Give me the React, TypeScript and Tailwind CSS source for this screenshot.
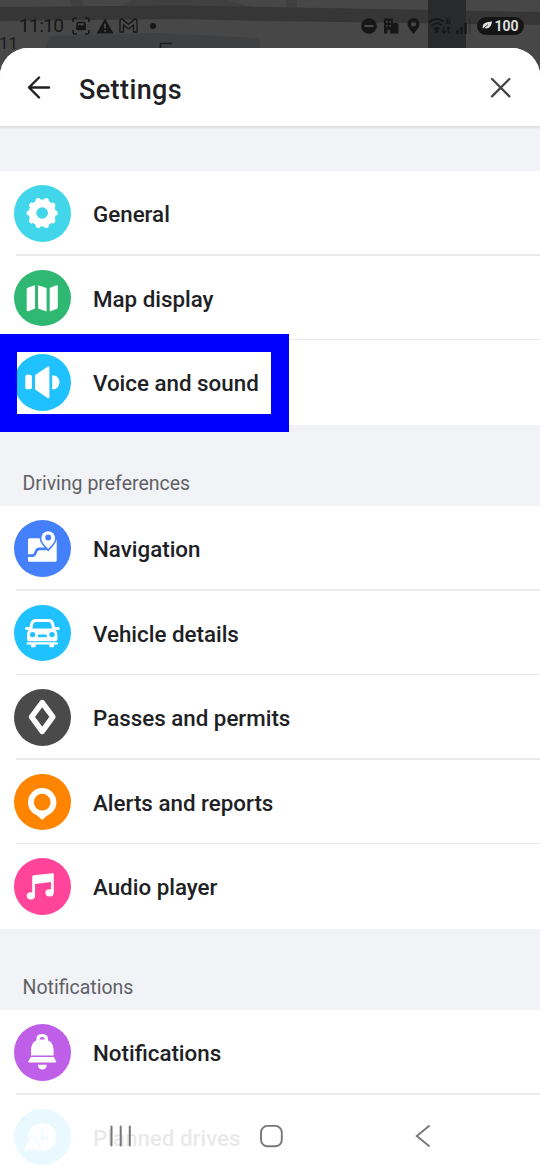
import type { ReactNode } from 'react'

type Item = {
	label: string
	color: string
	icon: ReactNode
}

const gearTeeth = [0, 36, 72, 108, 144, 180, 216, 252, 288, 324]

const general: Item[] = [
	{
		label: 'General',
		color: 'bg-[#41d6e9]',
		icon: (
			<>
				<circle cx="28.2" cy="28" r="9.7" stroke="#fff" strokeWidth="7.8" fill="none" />
				{gearTeeth.map((deg) => (
					<path
						key={deg}
						d="M39.8 28H41.2"
						stroke="#fff"
						strokeWidth="5.2"
						strokeLinecap="round"
						transform={`rotate(${deg} 28.2 28)`}
					/>
				))}
			</>
		),
	},
	{
		label: 'Map display',
		color: 'bg-[#2eb872]',
		icon: (
			<>
				<path d="M12.7 19.6Q12.7 18 14.3 17.4L21 15.2V38.6L14.3 41.2Q12.7 41.6 12.7 40Z" />
				<path d="M24 15.2L32.6 18V41.4L24 38.6Z" />
				<path d="M35.7 18L42.3 15.3Q43.8 15 43.8 16.6V37Q43.8 38.4 42.5 38.9L35.7 41.4Z" />
			</>
		),
	},
	{
		label: 'Voice and sound',
		color: 'bg-[#1fc1ff]',
		icon: (
			<>
				<rect x="11.3" y="20.8" width="6.6" height="14.4" rx="1.8" />
				<path d="M21 22.2Q21 21.2 21.8 20.5L33.6 12.8Q35.4 11.8 35.4 13.8V43Q35.4 45 33.6 44L21.8 35.9Q21 35.2 21 34.2Z" />
				<path d="M38.2 21.2C42.6 21.2 45.4 24 45.4 28.2S42.6 35.4 38.2 35.4Z" />
			</>
		),
	},
]

const driving: Item[] = [
	{
		label: 'Navigation',
		color: 'bg-[#4580fb]',
		icon: (
			<>
				<path d="M15.5 18.3H30L34.4 28L42.7 19.5V40.2Q42.7 41.7 41.2 41.7H15.5Q14 41.7 14 40.2V19.8Q14 18.3 15.5 18.3Z" />
				<path d="M13.8 35.6H18.5C22.8 35.6 20.5 28.8 25.2 28.8H30.5Q33.5 28.8 34.4 27" stroke="#4580fb" strokeWidth="2.7" fill="none" />
				<path
					d="M34.2 29C30 24.8 27.3 21.6 27.3 18.1A6.9 6.9 0 0 1 41.1 18.1C41.1 21.6 38.4 24.8 34.2 29Z"
					stroke="#4580fb"
					strokeWidth="3.4"
					paintOrder="stroke"
				/>
				<circle cx="34.2" cy="17.6" r="3" fill="#4580fb" />
			</>
		),
	},
	{
		label: 'Vehicle details',
		color: 'bg-[#1fc1ff]',
		icon: (
			<>
				<path d="M16.6 24.5L17.8 18.6Q18.6 15.6 21.6 15.5H34.8Q37.8 15.6 38.6 18.6L39.8 24.5" stroke="#fff" strokeWidth="3" fill="none" />
				<rect x="11.2" y="22" width="5" height="3" rx="1.2" />
				<rect x="40.6" y="22" width="5" height="3" rx="1.2" />
				<path d="M16.4 23.6H40Q43.4 26 43.4 29V34.2Q43.4 36.2 41.4 36.2H15Q13 36.2 13 34.2V29Q13 26 16.4 23.6Z" />
				<circle cx="18.6" cy="29.6" r="2.7" fill="#1fc1ff" />
				<circle cx="38" cy="29.6" r="2.7" fill="#1fc1ff" />
				<rect x="23.8" y="29.6" width="9" height="2.6" rx="1" fill="#1fc1ff" />
				<path d="M14 37.2H42.6Q44 37.2 44 38.4T42.6 39.6H40.2V40.8Q40.2 42.2 39 42.2H36.4Q35.2 42.2 35.2 40.8V39.6H21.8V40.8Q21.8 42.2 20.6 42.2H18Q16.8 42.2 16.8 40.8V39.6H14Q12.6 39.6 12.6 38.4T14 37.2Z" />
			</>
		),
	},
	{
		label: 'Passes and permits',
		color: 'bg-[#4a4a4a]',
		icon: <path d="M28.2 13.6L38.8 27.9L28.2 42.4L17.6 27.9Z" stroke="#fff" strokeWidth="5.6" strokeLinejoin="round" fill="none" />,
	},
	{
		label: 'Alerts and reports',
		color: 'bg-[#ff8400]',
		icon: (
			<>
				<circle cx="28.2" cy="28.2" r="11.3" stroke="#fff" strokeWidth="5.8" fill="none" />
				<path d="M22.6 40.8L27 45Q28.2 46.2 29.4 45L33.8 40.8Z" />
			</>
		),
	},
	{
		label: 'Audio player',
		color: 'bg-[#ff4499]',
		icon: (
			<>
				<path d="M18.2 18.8Q18.2 17.5 19.6 17.3L38.4 15.2Q39.8 15 39.8 16.4V34.2H37V24L21 26V37.5H18.2Z" />
				<ellipse cx="16.9" cy="37.8" rx="4.2" ry="3.6" />
				<ellipse cx="35.6" cy="34.8" rx="4.2" ry="3.6" />
			</>
		),
	},
]

const notifications: Item[] = [
	{
		label: 'Notifications',
		color: 'bg-[#bf5fe8]',
		icon: (
			<>
				<path d="M22.4 18V14.6Q22.6 10 28.2 10T34 14.6V18Z" />
				<path d="M17 31.4V27C17 19.4 20.4 15.2 28.2 15.2S39.6 19.4 39.6 27V31.4Z" />
				<path d="M25.6 15.6Q25.6 13 28.2 13T30.8 15.6Z" fill="#bf5fe8" />
				<path d="M16.8 33H39.8L42 37.2Q42.4 38.6 41 38.6H15.4Q14 38.6 14.4 37.2Z" />
				<path d="M23.8 40.8H32.8Q32.4 45.6 28.3 45.6T23.8 40.8Z" />
			</>
		),
	},
	{
		label: 'Planned drives',
		color: 'bg-[#1fc1ff]',
		icon: (
			<>
				<circle cx="28.4" cy="28" r="14" />
				<path d="M28.4 20V29.5H34.5" stroke="#1fc1ff" strokeWidth="2" fill="none" />
				<path
					d="M16.6 27.6Q17.8 26.2 19 27.6L26.2 40.4Q26.8 42.4 24.8 42L17.8 40L11.6 42Q9.8 42.4 10.4 40.4Z"
					stroke="#1fc1ff"
					strokeWidth="2.4"
					paintOrder="stroke"
				/>
			</>
		),
	},
]

function Row({ item, last }: { item: Item; last: boolean }) {
	return (
		<div className="relative flex h-[84.5px] shrink-0 items-center bg-white pt-[0.5px] pl-[14px]">
			<div className={`size-[56.5px] shrink-0 rounded-full ${item.color}`}>
				<svg viewBox="0 0 56.5 56.5" className="size-full" fill="#fff">
					{item.icon}
				</svg>
			</div>
			<span className="ml-[22.5px] pt-[1.5px] text-[22.35px] leading-7 font-medium whitespace-nowrap text-[#202124]">{item.label}</span>
			{!last && <div className="absolute right-0 bottom-0 left-4 z-10 h-[1.5px] bg-[#e8eaed]" />}
		</div>
	)
}

function Section({ title, items }: { title?: string; items: Item[] }) {
	return (
		<section className="flex shrink-0 flex-col">
			{title && (
				<h2 className="flex h-[81.5px] items-end pb-[8.5px] pl-[22.5px] text-[19.5px] leading-7 text-[#5f6165]">{title}</h2>
			)}
			{items.map((item, i) => (
				<Row key={item.label} item={item} last={i === items.length - 1} />
			))}
		</section>
	)
}

function MapBackdrop() {
	return (
		<svg className="absolute inset-0" width="540" height="90" viewBox="0 0 540 90">
			<rect width="540" height="90" fill="#474747" />
			<path d="M70 0H82L84 8H72ZM118 8L132 0H226L256 8ZM286 0H297V10H286Z" fill="#404040" />
			<path d="M50 36L160 33L255 38Q260 39 260 44V60H40Z" fill="#3f4041" />
			<path d="M0 7L180 5.5L540 12V25L270 21L180 19L0 21Z" fill="#363636" />
			<rect x="428" width="38" height="60" fill="#292a2b" />
			<text x="-1" y="49" fontSize="17" fill="#1c1c1c">11</text>
			<path d="M160.5 48V43.5H172" stroke="#1c1c1c" strokeWidth="1.6" fill="none" />
		</svg>
	)
}

function StatusBar() {
	return (
		<div className="relative flex h-12 items-center justify-between pt-[3px] pr-[16px] pl-[19px] text-[#171717]">
			<div className="flex items-center">
				<span className="w-[53px] pt-px text-[19px] leading-6 tracking-[-0.6px]">11:10</span>
				<svg width="18" height="18" viewBox="0 0 18 18" fill="none" stroke="currentColor" strokeWidth="1.6">
					<path d="M1 5V3Q1 1 3 1H5M13 1H15Q17 1 17 3V5M17 13V15Q17 17 15 17H13M5 17H3Q1 17 1 15V13" />
					<rect x="5" y="5.5" width="8" height="7" rx="1.5" />
					<path d="M5 11L8 8.5L10 10L13 8V12H5Z" fill="currentColor" />
				</svg>
				<svg className="ml-[6px]" width="18" height="16" viewBox="0 0 18 16">
					<path d="M9 .5L17.5 15.5H.5Z" fill="currentColor" />
					<path d="M9 5.5V10.5M9 12V13.8" stroke="#4a4a4a" strokeWidth="1.8" />
				</svg>
				<svg className="ml-[5px]" width="19" height="15" viewBox="0 0 19 15" fill="none" stroke="currentColor" strokeWidth="1.3">
					<path d="M1 14V3Q1 1 3 1L9.5 6.3L16 1Q18 1 18 3V14H14.5V7L9.5 11L4.5 7V14Z" />
				</svg>
				<div className="ml-[12px] size-[6px] rounded-full bg-[#171717]" />
			</div>
			<div className="flex items-center">
				<svg width="16" height="16" viewBox="0 0 16 16">
					<circle cx="8" cy="8" r="7.8" fill="currentColor" />
					<path d="M3.5 8H12.5" stroke="#4a4a4a" strokeWidth="2" />
				</svg>
				<svg className="ml-[7px]" width="15" height="16" viewBox="0 0 15 16">
					<path d="M0 2Q0 .5 1.5 .5H7.5Q9 .5 9 2V5H13Q14.5 5 14.5 6.5V15.5H6V12H3.5V15.5H0Z" fill="currentColor" />
					<path d="M2 4H3.6M5.4 4H7M2 8H3.6M5.4 8H7" stroke="#4a4a4a" strokeWidth="1.4" />
				</svg>
				<svg className="ml-[8px]" width="13" height="16" viewBox="0 0 13 16">
					<path d="M6.5 16C3 11.6 .5 9 .5 6A6 6 0 0 1 12.5 6C12.5 9 10 11.6 6.5 16ZM6.5 3.6A2.5 2.5 0 1 0 6.5 8.6A2.5 2.5 0 1 0 6.5 3.6Z" fill="currentColor" />
				</svg>
				<svg className="ml-[8px]" width="24" height="18" viewBox="0 0 24 18" fill="none" stroke="currentColor" strokeWidth="1.8">
					<path d="M1 5.5Q8.5 -1 16 4.5M3.5 8.8Q8.5 4 13.5 8M6 12Q8.5 9.5 11 12" />
					<circle cx="8.5" cy="14" r="1" fill="currentColor" />
					<path d="M16 10V16M14 14L16 16.3L18 14M20.5 16V10M18.8 12L20.5 10L22.3 12" strokeWidth="1.2" />
					<path d="M21.8 1.2H19V6.2H21.8V3.7H19" strokeWidth="1.1" />
				</svg>
				<svg className="ml-[4px]" width="16" height="16" viewBox="0 0 16 16" fill="currentColor">
					<rect y="12" width="2.4" height="4" />
					<rect x="4.2" y="9" width="2.4" height="7" />
					<rect x="8.4" y="5" width="2.4" height="11" />
					<rect x="12.6" y="1" width="2.4" height="15" opacity=".25" />
				</svg>
				<div className="ml-[5px] flex h-[18px] w-[47px] items-center justify-center gap-[2px] rounded-full bg-[#151515] text-[#dedede]">
					<svg width="10" height="9" viewBox="0 0 10 9">
						<path d="M1 8C-.5 3 3 .8 10 .5C9.5 5.5 6.5 8.5 2.5 7Z" fill="currentColor" />
						<path d="M0 8.6L6 3.6" stroke="#151515" strokeWidth=".8" />
					</svg>
					<span className="text-[14px] leading-none font-bold">100</span>
				</div>
			</div>
		</div>
	)
}

function NavBar() {
	return (
		<nav className="absolute inset-x-0 bottom-0 z-20 flex h-[74px] items-start bg-white/90 pt-[28px] pl-[109px] text-[#777]">
			<svg width="24" height="24" viewBox="0 0 24 24" fill="none" stroke="currentColor" strokeWidth="2" strokeLinecap="round">
				<path d="M2.5 2.5V21.5M11.7 2.5V21.5M20.8 2.5V21.5" />
			</svg>
			<svg className="ml-[126px]" width="25" height="24" viewBox="0 0 25 24" fill="none" stroke="currentColor" strokeWidth="1.9">
				<rect x="2" y="1.9" width="20.8" height="20.4" rx="6.5" />
			</svg>
			<svg className="ml-[130px]" width="18" height="24" viewBox="0 0 18 24" fill="none" stroke="currentColor" strokeWidth="1.9" strokeLinecap="round">
				<path d="M15 2L2.8 12L15 22" />
			</svg>
		</nav>
	)
}

export default function App() {
	return (
		<div className="relative flex h-[1170px] w-[540px] flex-col overflow-hidden bg-[#474747] font-['Roboto',sans-serif]">
			<MapBackdrop />
			<StatusBar />
			<main className="relative flex min-h-0 flex-1 flex-col overflow-hidden rounded-t-[28px] bg-[#f2f3f7]">
				<header className="flex h-[78px] shrink-0 items-center bg-white pr-[29px] pl-[27px] shadow-[0_1px_2px_1px_#dcdde0]">
					<svg width="24" height="24" viewBox="0 0 24 24" fill="none" stroke="#202124" strokeWidth="2.4" strokeLinecap="round" strokeLinejoin="round">
						<path d="M22 12.5H2M12 2.5L2 12.5L12 22.5" />
					</svg>
					<h1 className="ml-[28px] flex-1 pt-[5px] text-[27px] leading-8 font-medium tracking-[0.4px] text-[#202124]">Settings</h1>
					<svg width="21" height="21" viewBox="0 0 21 21" fill="none" stroke="#45474a" strokeWidth="2.3" strokeLinecap="round">
						<path d="M2 2L19.4 19.4M19.4 2L2 19.4" />
					</svg>
				</header>
				<div className="flex flex-col pt-[45px]">
					<Section items={general} />
					<Section title="Driving preferences" items={driving} />
					<Section title="Notifications" items={notifications} />
				</div>
			</main>
			<div className="absolute top-[334px] left-0 z-10 h-[98px] w-[289px] border-[18px] border-l-[17px] border-[#0000ff]" />
			<NavBar />
		</div>
	)
}
